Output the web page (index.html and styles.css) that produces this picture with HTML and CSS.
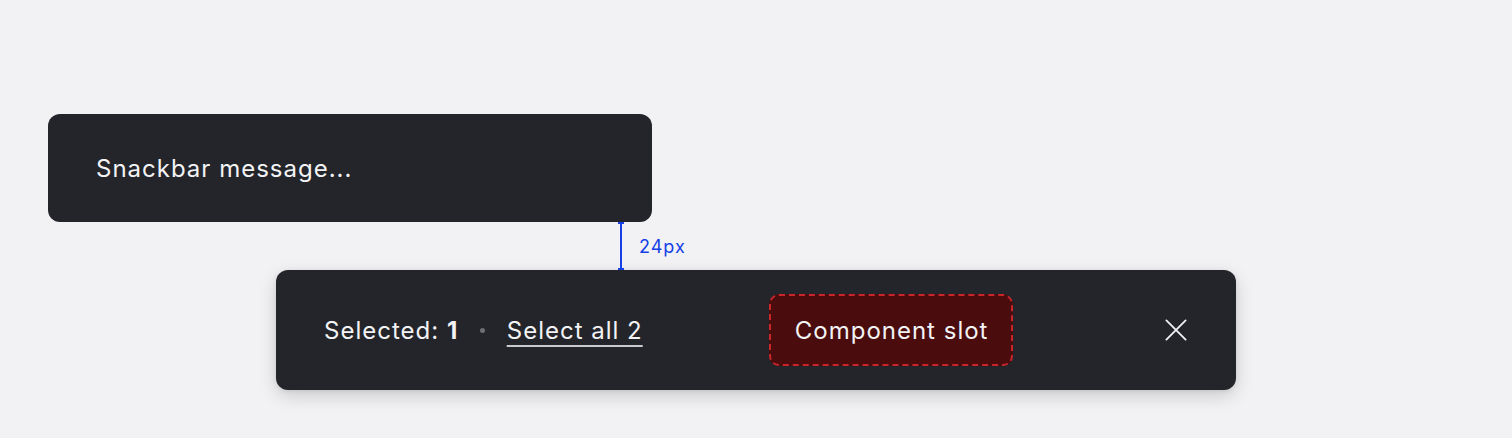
FILE: index.html
```html
<!DOCTYPE html>
<html>
<head>
<meta charset="utf-8">
<link rel="stylesheet" href="styles.css">
</head>
<body>
<div class="stage">
  <div class="snackbar small">
    <span class="msg">Snackbar message...</span>
  </div>
  <div class="measure">
    <svg class="mline" width="8" height="48" viewBox="0 0 8 48"><path d="M1 1H7M4 1V47M1 47H7" stroke="#1440e6" stroke-width="2" fill="none"/></svg>
    <span class="mlabel">24px</span>
  </div>
  <div class="snackbar big">
    <div class="sel">
      <span>Selected: <b>1</b></span>
      <span class="dot"></span>
      <a class="all">Select all 2</a>
    </div>
    <div class="slot">Component slot</div>
    <button class="close" aria-label="Close">
      <svg width="24" height="24" viewBox="0 0 24 24"><path d="M1.5 1.5L22.5 22.5M22.5 1.5L1.5 22.5" stroke="#f2f2f4" stroke-width="2" stroke-linecap="round" fill="none"/></svg>
    </button>
  </div>
</div>
</body>
</html>
```
FILE: styles.css
```css
* { box-sizing: border-box; }
html, body { margin: 0; padding: 0; }
body {
  background: #f2f2f4;
  font-family: Inter, "Noto Sans", sans-serif;
  width: 1512px;
  height: 438px;
  overflow: hidden;
}
.stage {
  position: relative;
  padding: 114px 0 0 48px;
  display: flex;
  flex-direction: column;
  align-items: flex-start;
  gap: 48px;
}
.snackbar {
  background: #24252a;
  color: #f3f3f5;
  border-radius: 12px;
  display: flex;
  align-items: center;
  font-size: 24px;
  letter-spacing: 1px;
}
.small {
  width: 604px;
  height: 108px;
  padding: 0 48px;
}
.big {
  margin-left: 228px;
  width: 960px;
  height: 120px;
  padding: 0 48px;
  box-shadow: 0 6px 18px rgba(0,0,0,0.16), 0 1px 4px rgba(0,0,0,0.08);
}
.sel { display: flex; align-items: center; gap: 21.5px; }
.sel b { font-weight: 700; letter-spacing: 1.5px; }
.dot { width: 5px; height: 5px; border-radius: 50%; background: #6e6f75; }
.all {
  color: #f3f3f5;
  text-decoration: underline;
  text-decoration-color: #c9c9ce;
  text-underline-offset: 6px;
  text-decoration-thickness: 1.5px;
}
.slot {
  margin-left: 126px;
  height: 72px;
  padding: 0 23px 0 24px;
  display: flex;
  align-items: center;
  background: #4a0c0d;
  border: 2px dashed #c9252b;
  border-radius: 10px;
}
.close {
  margin-left: auto;
  width: 24px; height: 24px;
  padding: 0; border: 0; background: none;
  display: flex;
}
.close svg { width: 22px; height: 22px; margin: 1px; }
.measure {
  position: absolute;
  left: 617px;
  top: 222px;
  height: 48px;
  display: flex;
  align-items: center;
}
.mline { display: block; }
.mlabel {
  margin-left: 14px;
  color: #1440e6;
  font-size: 18px;
  letter-spacing: 1px;
}
```
